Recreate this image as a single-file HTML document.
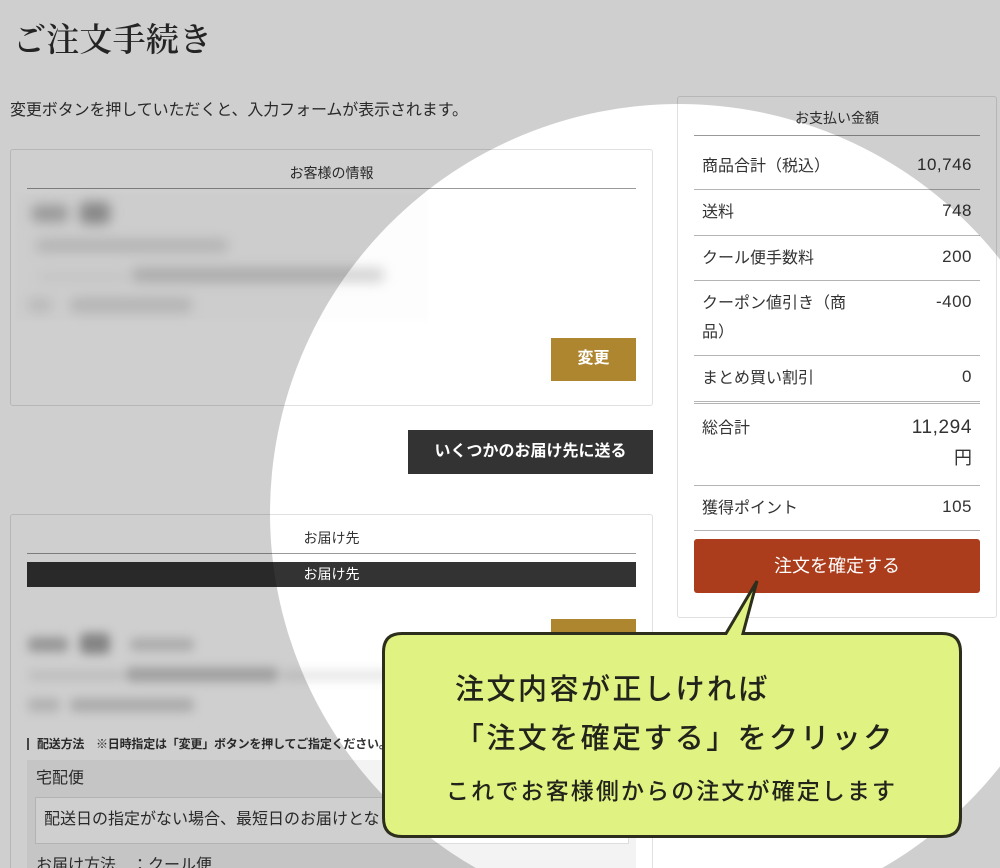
<!DOCTYPE html>
<html lang="ja">
<head>
<meta charset="utf-8">
<title>ご注文手続き</title>
<style>
html,body{margin:0;padding:0;background:#fff;width:1000px;height:868px;overflow:hidden}
body{font-family:"Liberation Sans","Noto Sans CJK JP",sans-serif;color:#333;font-size:16px}
#w{position:relative;width:1000px;height:868px;overflow:hidden}
.a{position:absolute;white-space:nowrap}
.card{position:absolute;border:1px solid #e0e0e0;border-radius:3px;box-sizing:border-box;background:#fff}
.hr{position:absolute;height:1px;background:#999}
.rl{position:absolute;left:694px;width:286px;height:1px;background:#b4b4b4}
.t{position:absolute;left:702px;line-height:26px;font-size:16px;white-space:nowrap}
.v{position:absolute;right:28px;line-height:26px;font-size:17px;white-space:nowrap;text-align:right;letter-spacing:.5px}
.c{position:absolute;text-align:center;white-space:nowrap}
.b{position:absolute;background:#999;border-radius:5px}
.call{position:absolute;white-space:nowrap;color:#22231a;font-weight:500}
</style>
</head>
<body>
<div id="w">
<div class="a" style="left:13px;top:18px;font-family:'Liberation Serif','Noto Serif CJK JP',serif;font-size:33px;line-height:46px;letter-spacing:.2px;font-weight:600;color:#2d2d2d">ご注文手続き</div>
<div class="a" style="left:10px;top:99px;line-height:24px;letter-spacing:-.1px">変更ボタンを押していただくと、入力フォームが表示されます。</div>

<div class="card" style="left:10px;top:149px;width:643px;height:257px"></div>
<div class="c" style="left:27px;width:609px;top:163px;font-size:14px;line-height:20px">お客様の情報</div>
<div class="hr" style="left:27px;width:609px;top:188px"></div>
<div class="a" style="left:16px;top:194px;width:412px;height:126px;background:#fdfdfd;filter:blur(2px)"></div>
<div class="a" style="left:16px;top:194px;width:420px;height:130px;filter:blur(6px)">
  <div class="b" style="left:16px;top:11px;width:36px;height:17px;background:#bdbdbd"></div>
  <div class="b" style="left:64px;top:8px;width:30px;height:22px;background:#a8a8a8"></div>
  <div class="b" style="left:20px;top:45px;width:192px;height:13px;background:#dcdcdc"></div>
  <div class="b" style="left:22px;top:78px;width:90px;height:10px;background:#f2f2f2"></div>
  <div class="b" style="left:116px;top:74px;width:252px;height:14px;background:#d2d2d2"></div>
  <div class="b" style="left:12px;top:104px;width:24px;height:14px;background:#e4e4e4"></div>
  <div class="b" style="left:54px;top:104px;width:122px;height:14px;background:#dcdcdc"></div>
</div>
<div class="c" style="left:551px;top:338px;width:85px;height:43px;line-height:42px;background:#ae862f;color:#fff;font-weight:700;font-size:16px">変更</div>

<div class="c" style="left:408px;top:430px;width:245px;height:44px;line-height:43px;background:#333;color:#fff;font-weight:700;font-size:16px">いくつかのお届け先に送る</div>

<div class="card" style="left:10px;top:514px;width:643px;height:354px;border-bottom:0;border-radius:3px 3px 0 0"></div>
<div class="c" style="left:27px;width:609px;top:528px;font-size:14px;line-height:20px">お届け先</div>
<div class="hr" style="left:27px;width:609px;top:553px"></div>
<div class="c" style="left:27px;width:609px;top:562px;height:25px;line-height:24px;background:#333;color:#fff;font-size:14px">お届け先</div>
<div class="a" style="left:551px;top:619px;width:85px;height:43px;background:#ae862f"></div>
<div class="a" style="left:16px;top:622px;width:420px;height:100px;filter:blur(5px)">
  <div class="b" style="left:12px;top:15px;width:40px;height:15px;background:#bbb"></div>
  <div class="b" style="left:64px;top:11px;width:30px;height:21px;background:#a4a4a4"></div>
  <div class="b" style="left:114px;top:16px;width:64px;height:13px;background:#d4d4d4"></div>
  <div class="b" style="left:12px;top:48px;width:96px;height:11px;background:#ebebeb"></div>
  <div class="b" style="left:110px;top:45px;width:152px;height:15px;background:#c6c6c6"></div>
  <div class="b" style="left:266px;top:48px;width:144px;height:11px;background:#e8e8e8"></div>
  <div class="b" style="left:12px;top:76px;width:32px;height:14px;background:#dcdcdc"></div>
  <div class="b" style="left:54px;top:76px;width:124px;height:14px;background:#d4d4d4"></div>
</div>
<div class="a" style="left:27px;top:738px;width:2px;height:12px;background:#555"></div>
<div class="a" style="left:37px;top:734px;font-size:12px;line-height:20px;font-weight:700;letter-spacing:-.2px">配送方法　※日時指定は「変更」ボタンを押してご指定ください。</div>
<div class="a" style="left:27px;top:760px;width:609px;height:108px;background:#f3f3f3"></div>
<div class="a" style="left:36px;top:766px;line-height:26px;font-size:16px">宅配便</div>
<div class="a" style="left:35px;top:797px;width:594px;height:47px;box-sizing:border-box;background:#fff;border:1px solid #ddd"></div>
<div class="a" style="left:44px;top:807px;line-height:26px;font-size:16px">配送日の指定がない場合、最短日のお届けとなります。</div>
<div class="a" style="left:36px;top:864px;height:4px;line-height:4px;font-size:16px">お届け方法　：クール便</div>

<div class="card" style="left:677px;top:96px;width:320px;height:522px"></div>
<div class="c" style="left:694px;width:286px;top:108px;font-size:14px;line-height:20px">お支払い金額</div>
<div class="rl" style="top:135px;background:#999"></div>
<div class="t" style="top:154px">商品合計（税込）</div><div class="v" style="top:152px">10,746</div>
<div class="rl" style="top:189px"></div>
<div class="t" style="top:200px">送料</div><div class="v" style="top:198px">748</div>
<div class="rl" style="top:235px"></div>
<div class="t" style="top:246px">クール便手数料</div><div class="v" style="top:244px">200</div>
<div class="rl" style="top:280px"></div>
<div class="t" style="top:291px">クーポン値引き（商</div><div class="v" style="top:289px">-400</div>
<div class="t" style="top:320px">品）</div>
<div class="rl" style="top:355px"></div>
<div class="t" style="top:366px">まとめ買い割引</div><div class="v" style="top:364px">0</div>
<div class="rl" style="top:401px"></div><div class="rl" style="top:403px"></div>
<div class="t" style="top:416px">総合計</div><div class="v" style="top:415px;font-size:19px;letter-spacing:.6px">11,294</div>
<div class="v" style="top:445px;font-size:18px;letter-spacing:0">円</div>
<div class="rl" style="top:485px"></div>
<div class="t" style="top:496px">獲得ポイント</div><div class="v" style="top:494px">105</div>
<div class="rl" style="top:530px"></div>
<div class="c" style="left:694px;top:539px;width:286px;height:54px;line-height:55px;border-radius:3px;background:#ab3d1d;color:#fff;font-size:18px">注文を確定する</div>

<svg class="a" style="left:0;top:0" width="1000" height="868" viewBox="0 0 1000 868">
  <path fill="#000" fill-opacity=".19" fill-rule="evenodd" d="M0 0H1000V868H0Z M270 513a409 409 0 1 0 818 0a409 409 0 1 0 -818 0Z"/>
  <path fill="#e0f282" stroke="#2e2e1c" stroke-width="3" stroke-linejoin="miter" d="M402 633.5H726L757 581L743 633.5H942Q960.5 633.5 960.5 652V818Q960.5 836.5 942 836.5H402Q383.5 836.5 383.5 818V652Q383.5 633.5 402 633.5Z"/>
</svg>

<div class="call" style="left:455px;top:669px;font-size:29px;line-height:42px;letter-spacing:2.5px">注文内容が正しければ</div>
<div class="call" style="left:455px;top:718px;font-size:29px;line-height:42px;letter-spacing:2.4px">「注文を確定する」をクリック</div>
<div class="call" style="left:446px;top:774px;font-size:23px;line-height:34px;letter-spacing:2.1px">これでお客様側からの注文が確定します</div>
</div>
</body>
</html>
